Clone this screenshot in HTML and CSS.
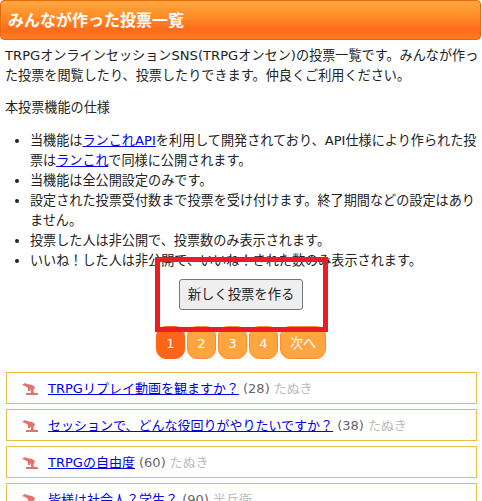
FILE: index.html
```html
<!DOCTYPE html>
<html lang="ja">
<head>
<meta charset="utf-8">
<title>みんなが作った投票一覧</title>
<link rel="stylesheet" href="styles.css">
</head>
<body>
<h1 class="title">みんなが作った投票一覧</h1>
<div class="content">
  <p class="para">TRPGオンラインセッションSNS(TRPGオンセン)の投票一覧です。みんなが作った投票を閲覧したり、投票したりできます。仲良くご利用ください。</p>
  <p class="para">本投票機能の仕様</p>
  <ul class="specs">
    <li>当機能は<a href="#">ランこれAPI</a>を利用して開発されており、API仕様により作られた投票は<a href="#">ランこれ</a>で同様に公開されます。</li>
    <li>当機能は全公開設定のみです。</li>
    <li>設定された投票受付数まで投票を受け付けます。終了期間などの設定はありません。</li>
    <li>投票した人は非公開で、投票数のみ表示されます。</li>
    <li>いいね！した人は非公開で、いいね！された数のみ表示されます。</li>
  </ul>
  <div class="action"><button class="new-btn">新しく投票を作る</button><span class="highlight"></span></div>
  <nav class="pager">
    <a class="page current" href="#">1</a><a class="page" href="#">2</a><a class="page" href="#">3</a><a class="page" href="#">4</a><a class="page next" href="#">次へ</a>
  </nav>
  <ul class="votes">
    <li class="vote"><svg class="icon" viewBox="0 0 16 12"><use href="#kanga"/></svg><span><a href="#">TRPGリプレイ動画を観ますか？</a> <span class="count">(28)</span> <span class="author">たぬき</span></span></li>
    <li class="vote"><svg class="icon" viewBox="0 0 16 12"><use href="#kanga"/></svg><span><a href="#">セッションで、どんな役回りがやりたいですか？</a> <span class="count">(38)</span> <span class="author">たぬき</span></span></li>
    <li class="vote"><svg class="icon" viewBox="0 0 16 12"><use href="#kanga"/></svg><span><a href="#">TRPGの自由度</a> <span class="count">(60)</span> <span class="author">たぬき</span></span></li>
    <li class="vote"><svg class="icon" viewBox="0 0 16 12"><use href="#kanga"/></svg><span><a href="#">皆様は社会人？学生？</a> <span class="count">(90)</span> <span class="author">半兵衛</span></span></li>
  </ul>
</div>
<svg class="defs" width="0" height="0"><defs><g id="kanga" fill="#e4716b"><path d="M0 2 L3 0 L5 1 L10 2 L13 4 L12 7 L9 6 L8 8 L6 8 L6 5 L3 3 Z"/><path d="M4 10 H16 V12 H4 Z"/><path d="M9 6 L11 6 L12 10 L9 10 Z"/></g></defs></svg>
</body>
</html>
```
FILE: styles.css
```css
html, body { margin: 0; padding: 0; }
body {
  font-family: "DejaVu Sans", "Noto Sans CJK JP", sans-serif;
  font-size: 13.14px;
  line-height: 20px;
  color: #222;
  background: #fff;
  overflow: hidden;
  height: 501px;
}
.title {
  margin: 0 1px 0 0;
  height: 40px;
  box-sizing: border-box;
  padding: 0 7px;
  font-family: "Noto Sans CJK JP", sans-serif;
  font-size: 16px;
  font-weight: bold;
  line-height: 36px;
  color: #fff;
  border: 1px solid #e8690f;
  border-radius: 4px;
  background: linear-gradient(to bottom, #ffa63e 0%, #ff8a24 45%, #ff6a1c 75%, #ff7d1e 100%);
}
.content { padding: 6px 2px 0 5px; }
.para { margin: 0 0 12px; }
.para + .para { margin-bottom: 13px; }
.specs { margin: 0; padding: 0 0 0 25px; }
.action { position: relative; display: flex; justify-content: center; padding: 8px 0 16px; margin-left: -5px; margin-right: -2px; }
.new-btn {
  font: inherit;
  font-size: 13.33px;
  width: 124px;
  height: 31px;
  padding: 0;
  color: #222;
  background: #efefef;
  border: 1px solid #767676;
  border-radius: 3px;
}
.highlight {
  position: absolute;
  left: 155px;
  top: -14px;
  width: 173px;
  height: 75px;
  box-sizing: border-box;
  border: 5px solid #ed1c24;
}
.pager { display: flex; justify-content: center; gap: 2px; height: 33px; margin: 0 0 13px; padding-right: 3px; }
.page {
  display: block;
  box-sizing: border-box;
  width: 29px;
  text-align: center;
  line-height: 33px;
  color: #fff;
  text-decoration: none;
  background: #ffa53f;
  border: 1px solid #ff8a30;
  border-radius: 10px;
}
.page.next { width: 46px; }
.page.current { background: #ff6519; border-color: #ff6519; }
.votes { list-style: none; margin: 0; padding: 0 3px 0 1px; font-size: 13px; }
.vote {
  display: flex;
  align-items: center;
  height: 32px;
  box-sizing: border-box;
  margin: 0 0 5px;
  padding: 1px 0 0 15px;
  border: 1px solid #e8bf45;
  white-space: nowrap;
}
.icon { width: 16px; height: 12px; margin-right: 10px; flex: none; }
.count { color: #666; }
.author { color: #bbb; }
.defs { position: absolute; }
```
